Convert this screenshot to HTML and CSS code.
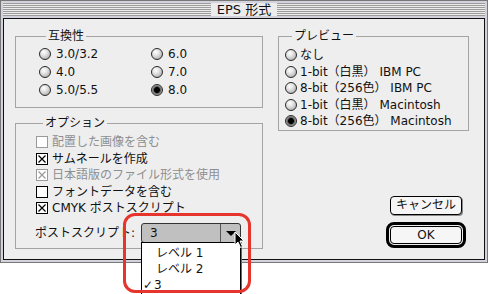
FILE: index.html
```html
<!DOCTYPE html>
<html lang="ja">
<head>
    <meta charset="UTF-8">
    <title>EPS 形式</title>
    <link rel="stylesheet" href="styles.css">
</head>
<body>
    <div class="window">
        <div class="titlebar">
            <div class="stripes"><span class="title">EPS 形式</span></div>
        </div>
        <div class="content">
            <div class="col-left">
                <div class="group compat">
                    <div class="group-title">互換性</div>
                    <div class="radio-grid">
                        <div class="radio"><span class="dot"></span>3.0/3.2</div>
                        <div class="radio"><span class="dot"></span>4.0</div>
                        <div class="radio"><span class="dot"></span>5.0/5.5</div>
                        <div class="radio"><span class="dot"></span>6.0</div>
                        <div class="radio"><span class="dot"></span>7.0</div>
                        <div class="radio"><span class="dot on"></span>8.0</div>
                    </div>
                </div>
                <div class="group options">
                    <div class="group-title">オプション</div>
                    <div class="check-list">
                        <div class="check disabled"><span class="box"></span>配置した画像を含む</div>
                        <div class="check"><span class="box"><svg width="10" height="10"><path d="M1.5 1.5L8.5 8.5M8.5 1.5L1.5 8.5" stroke="#000" stroke-width="1.2"/></svg></span>サムネールを作成</div>
                        <div class="check disabled"><span class="box"><svg width="10" height="10"><path d="M1.5 1.5L8.5 8.5M8.5 1.5L1.5 8.5" stroke="#999" stroke-width="1.2"/></svg></span>日本語版のファイル形式を使用</div>
                        <div class="check"><span class="box"></span>フォントデータを含む</div>
                        <div class="check"><span class="box"><svg width="10" height="10"><path d="M1.5 1.5L8.5 8.5M8.5 1.5L1.5 8.5" stroke="#000" stroke-width="1.2"/></svg></span>CMYK ポストスクリプト</div>
                    </div>
                    <div class="ps-row">
                        <span class="ps-label">ポストスクリプト:</span>
                        <div class="popup">
                            <span class="popup-value">3</span>
                            <span class="popup-arrow"></span>
                        </div>
                    </div>
                </div>
            </div>
            <div class="col-right">
                <div class="group preview">
                    <div class="group-title">プレビュー</div>
                    <div class="radio-list">
                        <div class="radio"><span class="dot"></span>なし</div>
                        <div class="radio"><span class="dot"></span>1-bit（白黒） IBM PC</div>
                        <div class="radio"><span class="dot"></span>8-bit（256色） IBM PC</div>
                        <div class="radio"><span class="dot"></span>1-bit（白黒） Macintosh</div>
                        <div class="radio"><span class="dot on"></span>8-bit（256色） Macintosh</div>
                    </div>
                </div>
                <div class="buttons">
                    <div class="btn">キャンセル</div>
                    <div class="btn-ring"><div class="btn">OK</div></div>
                </div>
            </div>
        </div>
    </div>

    <div class="menu">
        <div class="menu-item"><span class="mark"></span>レベル 1</div>
        <div class="menu-item"><span class="mark"></span>レベル 2</div>
        <div class="menu-item checked"><span class="mark">✓</span>3</div>
    </div>
    <div class="callout"></div>
    <svg class="cursor" width="12" height="18" viewBox="0 0 12 18">
        <path d="M1 1L1 14L4 11L6.5 16.5L8.5 15.5L6 10L10 10Z" fill="#000" stroke="#fff" stroke-width="1"/>
    </svg>
</body>
</html>
```

FILE: styles.css
```css
* {
    margin: 0;
    padding: 0;
    box-sizing: border-box;
}

body {
    position: relative;
    width: 488px;
    height: 294px;
    overflow: hidden;
    background: #fff;
    color: #111;
    font-family: "DejaVu Sans", "Noto Sans CJK JP", sans-serif;
    font-size: 12px;
    line-height: 14px;
}

.window {
    width: 488px;
    height: 263px;
    border: 1px solid #777;
    padding: 0 2px 2px 2px;
    background: #d2d2dc;
    display: flex;
    flex-direction: column;
}

.titlebar {
    height: 17px;
    padding: 2px 0;
}

.stripes {
    height: 13px;
    background: repeating-linear-gradient(to bottom, #9c9c9c 0 1px, #ececec 1px 2px);
    display: flex;
    justify-content: center;
}

.title {
    background: #ececec;
    padding: 0 6px;
    height: 13px;
    line-height: 13px;
    font-size: 13px;
}

.content {
    flex: 1;
    border: 1px solid #111;
    background: #eeeeee;
    display: flex;
    gap: 15px;
    padding: 17px 0 0 11px;
}

.col-left {
    width: 248px;
    display: flex;
    flex-direction: column;
    gap: 15px;
}

.col-right {
    width: 191px;
    display: flex;
    flex-direction: column;
}

.group {
    border: 1px solid #a4a4a4;
}

.group-title {
    display: table;
    margin: -8px 0 0 7px;
    padding: 0 2px;
    background: #eeeeee;
}

/* compat */
.compat {
    height: 72px;
    padding-left: 23px;
}

.radio-grid {
    margin-top: 2px;
    display: grid;
    grid-template-rows: repeat(3, 18px);
    grid-template-columns: 112px auto;
    grid-auto-flow: column;
}

.radio {
    display: flex;
    align-items: center;
    gap: 5px;
}

.dot {
    width: 12px;
    height: 12px;
    border-radius: 50%;
    border: 1px solid #2a2a2a;
    background: radial-gradient(circle at 38% 32%, #fff 0, #e4e4e4 35%, #9a9a9a 100%);
    flex-shrink: 0;
}

.dot.on {
    background: radial-gradient(circle, #000 0 2.6px, #555 3.2px, #bbb 5.5px);
}

/* options */
.options {
    height: 126px;
    padding-left: 20px;
}

.check-list {
    margin-top: 4px;
}

.check {
    height: 16.5px;
    display: flex;
    align-items: center;
    gap: 4px;
}

.box {
    width: 12px;
    height: 12px;
    border: 1px solid #000;
    background: #fff;
    display: flex;
    flex-shrink: 0;
}

.check.disabled {
    color: #8e8e8e;
}

.check.disabled .box {
    border-color: #9a9a9a;
}

.ps-row {
    margin: 6.5px 0 0 -1px;
    display: flex;
    align-items: center;
    height: 20px;
}

.ps-label {
    width: 106px;
    white-space: nowrap;
}

.popup {
    width: 100px;
    height: 20px;
    border: 1px solid #333;
    border-radius: 3px;
    background: #c0c0c0;
    display: flex;
}

.popup-value {
    flex: 1;
    padding-left: 8px;
    line-height: 18px;
}

.popup-arrow {
    width: 20px;
    border-left: 1px solid #555;
    display: flex;
    justify-content: center;
    align-items: center;
}

.popup-arrow::after {
    content: "";
    border-left: 5px solid transparent;
    border-right: 5px solid transparent;
    border-top: 5px solid #000;
}

/* preview */
.preview {
    height: 95px;
    padding-left: 6px;
}

.radio-list {
    margin-top: 4px;
}

.radio-list .radio {
    height: 16.5px;
    gap: 3px;
}

/* buttons */
.buttons {
    margin-top: 65px;
    width: 80px;
    align-self: flex-end;
    margin-right: 3px;
    display: flex;
    flex-direction: column;
    align-items: center;
    gap: 7px;
}

.btn {
    width: 72px;
    height: 19px;
    border: 1px solid #000;
    border-radius: 4px;
    background: #f6f6f6;
    box-shadow: 1px 1px 0 #8a8a8a;
    text-align: center;
    line-height: 17px;
}

.btn-ring {
    width: 80px;
    height: 26px;
    border: 3px solid #000;
    border-radius: 8px;
    padding: 1px;
    display: flex;
    justify-content: center;
}

.btn-ring .btn {
    height: 18px;
    line-height: 16px;
    box-shadow: none;
}

/* open popup menu and annotation */
.menu {
    position: absolute;
    left: 141px;
    top: 242px;
    width: 100px;
    height: 60px;
    background: #fff;
    border: 1px solid #000;
    box-shadow: 1px 0 0 #666;
    padding-top: 2px;
}

.menu-item {
    height: 16px;
    display: flex;
    align-items: center;
    padding-left: 1px;
}

.mark {
    width: 13px;
}

.menu-item.checked .mark {
    width: 11px;
}

.callout {
    position: absolute;
    left: 123px;
    top: 213px;
    width: 128px;
    height: 80px;
    border: 3px solid #e6352c;
    border-radius: 12px;
}

.cursor {
    position: absolute;
    left: 234px;
    top: 231px;
}
```
